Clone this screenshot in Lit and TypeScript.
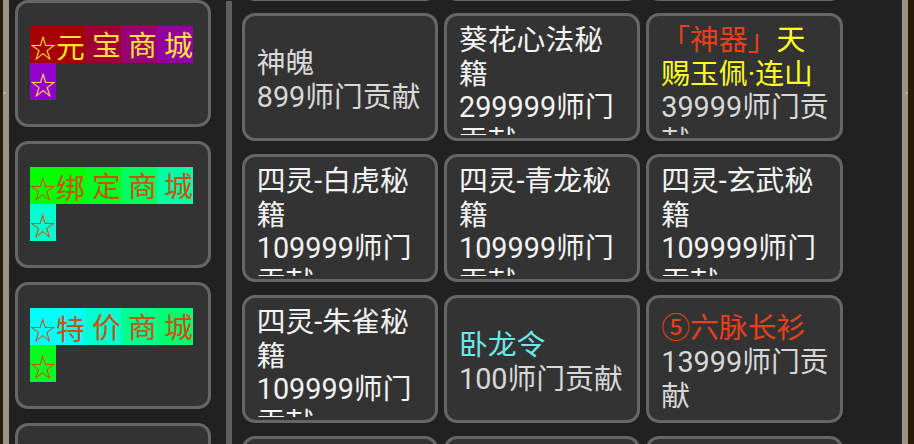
import { LitElement, html, css } from "lit";
import { customElement } from "lit/decorators.js";

interface Seg { t: string; c: string; }
interface Item { name: Seg[]; text: string; c: string; }
interface Chunk { star?: boolean; t: string; bg: string; }

const GOLD = "#ffe23c";
const ORANGE = "#cc5010";
const WHITE = "#f4f4f4";
const GREY = "#d8d8d8";

const shopRow = (word: string, colors: string[]): Chunk[][] => {
  const chars = [...word];
  return [
    [{ star: true, t: "☆", bg: colors[0] }, { t: chars[0], bg: colors[0] }],
    [{ t: " " + chars[1], bg: colors[1] }],
    [{ t: " " + chars[2], bg: colors[2] }],
    [{ t: " " + chars[3], bg: colors[3] }],
    [{ star: true, t: "☆", bg: colors[4] }],
  ];
};

const shops = [
  { color: GOLD, segs: shopRow("元宝商城", ["#a60000", "#a00030", "#960070", "#9200a0", "#9200d0"]) },
  { color: ORANGE, segs: shopRow("绑定商城", ["#00ff00", "#00ff20", "#00ff60", "#00ffa0", "#00ffd0"]) },
  { color: ORANGE, segs: shopRow("特价商城", ["#00ffff", "#00ffd0", "#00ff90", "#00ff70", "#00ff20"]) },
  { color: GOLD, segs: [] as Chunk[][] },
];

const items: Item[] = [
  { text: "899师门贡献", c: GREY, name: [{ t: "神魄", c: GREY }] },
  { text: "299999师门贡献", c: WHITE, name: [{ t: "葵花心法秘籍", c: WHITE }] },
  { text: "39999师门贡献", c: GREY, name: [{ t: "「神器」", c: "#e8401c" }, { t: "天赐玉佩·连山", c: "#ffff20" }] },
  { text: "109999师门贡献", c: WHITE, name: [{ t: "四灵-白虎秘籍", c: WHITE }] },
  { text: "109999师门贡献", c: WHITE, name: [{ t: "四灵-青龙秘籍", c: WHITE }] },
  { text: "109999师门贡献", c: WHITE, name: [{ t: "四灵-玄武秘籍", c: WHITE }] },
  { text: "109999师门贡献", c: WHITE, name: [{ t: "四灵-朱雀秘籍", c: WHITE }] },
  { text: "100师门贡献", c: GREY, name: [{ t: "卧龙令", c: "#6fe8e8" }] },
  { text: "13999师门贡献", c: GREY, name: [{ t: "⑤六脉长衫", c: "#e8401c" }] },
];

@customElement("app-root")
export class AppRoot extends LitElement {
  static styles = css`
    :host {
      display: block;
      width: 914px;
      height: 444px;
      overflow: hidden;
      font-family: Roboto, "Noto Sans CJK SC", sans-serif;
    }
    .frame {
      position: relative;
      box-sizing: border-box;
      height: 444px;
      background: #212121;
      display: flex;
      border-left: 3px solid #2a1a08;
      border-right: 6px solid #2a1a08;
      overflow: hidden;
    }
    .edge { width: 6px; background: #9a9484; flex: none; }
    .tick { position: absolute; top: 92px; width: 6px; height: 2px; background: #b5b0a4; }
    .tick.l { left: -3px; }
    .tick.r { right: -4px; }
    .side {
      width: 196px;
      margin: -0.5px 0 0 6px;
      flex: none;
      display: flex;
      flex-direction: column;
      gap: 13.5px;
    }
    .shop {
      box-sizing: border-box;
      flex: none;
      height: 127.5px;
      border: 3px solid #666;
      border-radius: 13px;
      background: #333;
      display: flex;
      align-items: center;
      padding: 0 12px;
      font-size: 28.8px;
    }
    .seg {
      display: inline-block;
      vertical-align: top;
      height: 37px;
      line-height: 41px;
      white-space: pre;
    }
    .star { font-size: 26px; font-family: "Noto Sans CJK SC", sans-serif; }
    .rule { width: 6px; background: #5f5f5f; flex: none; margin: 1px 9.5px 0 15px; }
    .grid {
      flex: none;
      margin-top: -128px;
      display: grid;
      grid-template-columns: repeat(3, 196.5px);
      grid-auto-rows: 128px;
      column-gap: 5.75px;
      row-gap: 13px;
      align-content: start;
    }
    .item {
      box-sizing: border-box;
      border: 3px solid #666;
      border-radius: 13px;
      background: #333;
      padding: 8px 10px 3px 12.25px;
      display: flex;
      flex-direction: column;
      justify-content: center;
      overflow: hidden;
      font-size: 28.8px;
      line-height: 33.7px;
    }
    .item::before { content: ""; flex: 0 1 3px; }
    .item.ghost { height: 129px; }
    .label { flex: none; max-height: 111px; overflow: hidden; }
    .fill { flex: 1; }
  `;

  render() {
    const blanks = [0, 1, 2];
    return html`<div class="frame">
      <div class="edge"></div>
      <div class="side">
        ${shops.map(
          (s) => html`<div class="shop" style="color:${s.color}">
            <div>
              ${s.segs.map(
                (seg) => html`<div class="seg" style="background:${seg[0].bg}">${seg.map(
                  (c) => (c.star ? html`<span class="star">${c.t}</span>` : c.t)
                )}</div>`
              )}
            </div>
          </div>`
        )}
      </div>
      <div class="rule"></div>
      <div class="grid">
        ${blanks.map(() => html`<div class="item ghost"></div>`)}
        ${items.map(
          (it) => html`<div class="item">
            <div class="label" style="color:${it.c}">
              ${it.name.map((n) => html`<span style="color:${n.c}">${n.t}</span>`)}<br />${it.text}
            </div>
          </div>`
        )}
        ${blanks.map(() => html`<div class="item"></div>`)}
      </div>
      <div class="fill"></div>
      <div class="edge"></div>
      <div class="tick l"></div>
      <div class="tick r"></div>
    </div>`;
  }
}
